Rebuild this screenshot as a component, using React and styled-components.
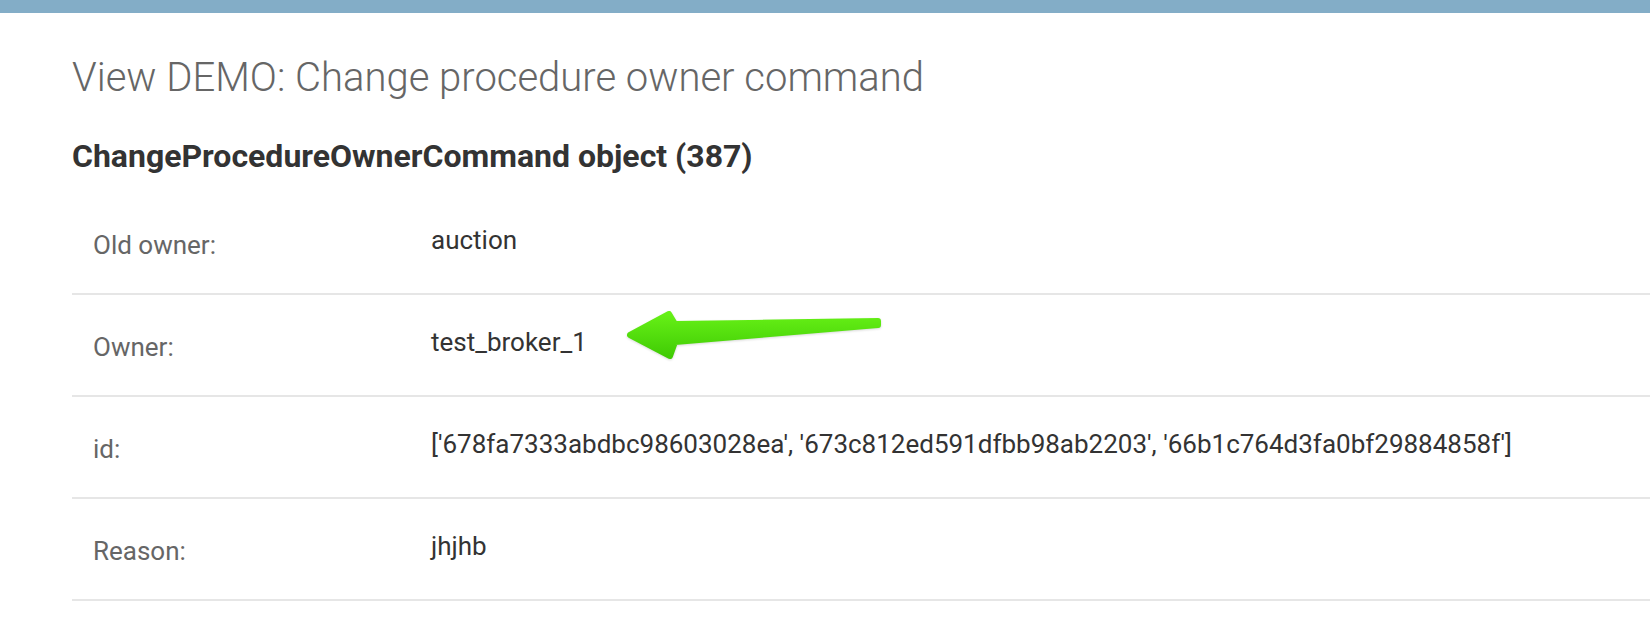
import React from "react";
import styled, { createGlobalStyle } from "styled-components";

const GlobalStyle = createGlobalStyle`
  html, body {
    margin: 0;
    padding: 0;
    background: #fff;
    font-family: Roboto, "Liberation Sans", sans-serif;
  }
`;

const fields = [
  { label: "Old owner:", value: "auction" },
  { label: "Owner:", value: "test_broker_1", pointer: true },
  {
    label: "id:",
    value:
      "['678fa7333abdbc98603028ea', '673c812ed591dfbb98ab2203', '66b1c764d3fa0bf29884858f']",
  },
  { label: "Reason:", value: "jhjhb" },
];

// green annotation arrow drawn over the "Owner" value
const Arrow = () => (
  <ArrowSvg width="270" height="64" viewBox="0 0 270 64">
    <defs>
      <linearGradient id="arrowFill" x1="0" y1="0" x2="0" y2="1">
        <stop offset="0" stopColor="#66f016" />
        <stop offset="1" stopColor="#41cc05" />
      </linearGradient>
    </defs>
    <path
      d="M10 33 L49 12 L55 22 L258 19 L258 23 L55 40 L50 54 Z"
      fill="url(#arrowFill)"
      stroke="url(#arrowFill)"
      strokeWidth="6"
      strokeLinejoin="round"
    />
  </ArrowSvg>
);

const App = () => {
  return (
    <>
      <GlobalStyle />
      <TopBar />
      <Content>
        <Title>View DEMO: Change procedure owner command</Title>
        <Subtitle>ChangeProcedureOwnerCommand object (387)</Subtitle>
        <Fieldset>
          {fields.map((f) => (
            <Row key={f.label}>
              <Label>{f.label}</Label>
              <Value>
                {f.value}
                {f.pointer ? <Arrow /> : null}
              </Value>
            </Row>
          ))}
        </Fieldset>
      </Content>
    </>
  );
};

export default App;

const TopBar = styled.div`
  height: 13px;
  background: #83adc7;
`;

const Content = styled.div`
  padding: 41px 0 0 72px;
`;

const Title = styled.h1`
  margin: 0;
  font-size: 40px;
  font-weight: 300;
  color: #666;
  line-height: 1.2;
`;

const Subtitle = styled.h2`
  margin: 35px 0 0;
  font-size: 32px;
  font-weight: 700;
  color: #333;
  line-height: 1.2;
`;

const Fieldset = styled.div`
  margin-top: 18px;
`;

const Row = styled.div`
  display: grid;
  grid-template-columns: 338px 1fr;
  height: 100px;
  padding-left: 21px;
  border-bottom: 2px solid #e6e6e6;
`;

const Label = styled.div`
  padding-top: 37px;
  font-size: 26px;
  color: #666;
`;

const Value = styled.div`
  position: relative;
  padding-top: 32px;
  font-size: 26px;
  color: #333;
`;

const ArrowSvg = styled.svg`
  position: absolute;
  left: 189px;
  top: 7px;
  filter: drop-shadow(0 1px 1px rgba(0, 0, 0, 0.15));
`;
